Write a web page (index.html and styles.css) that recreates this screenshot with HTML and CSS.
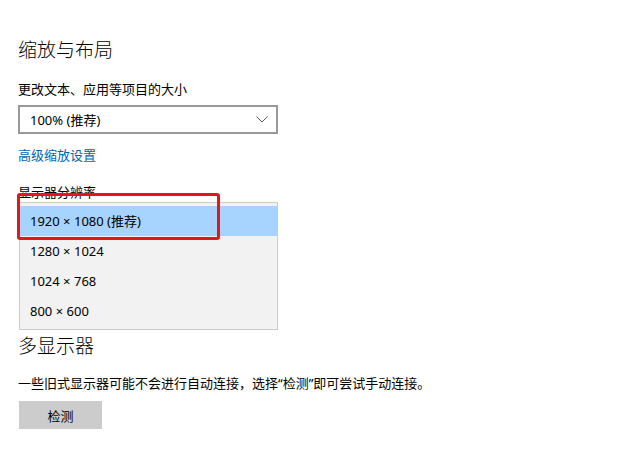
FILE: index.html
```html
<!DOCTYPE html>
<html lang="zh-CN">
<head>
<meta charset="utf-8">
<link rel="stylesheet" href="styles.css">
</head>
<body>
<div class="page">
  <h1 class="heading">缩放与布局</h1>
  <p class="label first">更改文本、应用等项目的大小</p>
  <div class="select">
    <span>100% (推荐)</span>
    <svg class="chev" width="12" height="7" viewBox="0 0 12 7"><polyline points="0.5,0.5 6,6 11.5,0.5" fill="none" stroke="#555" stroke-width="1"/></svg>
  </div>
  <a class="link">高级缩放设置</a>
  <div class="res">
    <p class="label">显示器分辨率</p>
    <div class="select under"></div>
    <ul class="menu">
      <li class="sel">1920 × 1080 (推荐)</li>
      <li>1280 × 1024</li>
      <li>1024 × 768</li>
      <li>800 × 600</li>
    </ul>
    <div class="mark"></div>
  </div>
  <h2 class="heading">多显示器</h2>
  <p class="label desc">一些旧式显示器可能不会进行自动连接，选择“检测”即可尝试手动连接。</p>
  <button class="btn">检测</button>
</div>
</body>
</html>
```
FILE: styles.css
```css
html, body {
  margin: 0;
  padding: 0;
  background: #fff;
}
body {
  font-family: "Noto Sans", "Noto Sans CJK SC", sans-serif;
  color: #000;
}
.page {
  padding: 38px 0 0 18px;
  display: flex;
  flex-direction: column;
  align-items: flex-start;
}
.heading {
  margin: 0;
  font-size: 19px;
  line-height: 24px;
  font-weight: 300;
}
.label {
  margin: 0;
  font-size: 13px;
  line-height: 18px;
}
.label.first {
  margin-top: 18px;
}
.select {
  margin-top: 7px;
  box-sizing: border-box;
  width: 260px;
  height: 29px;
  border: 2px solid #999;
  background: #fff;
  display: flex;
  align-items: center;
  justify-content: space-between;
  padding: 0 8px 0 10px;
  font-size: 13px;
}
.chev {
  display: block;
}
.link {
  margin-top: 12px;
  font-size: 13px;
  line-height: 18px;
  color: #0063b1;
}
.res {
  position: relative;
  margin-top: 19px;
  height: 151px;
  width: 260px;
}
.menu {
  position: absolute;
  top: 19px;
  left: 1px;
  width: 259px;
  box-sizing: border-box;
  margin: 0;
  padding: 3px 0;
  list-style: none;
  background: #f2f2f2;
  border: 1px solid #ccc;
}
.menu li {
  height: 30px;
  line-height: 30px;
  padding-left: 10px;
  font-size: 13px;
}
.menu li.sel {
  background: #a6d3ff;
}
.mark {
  position: absolute;
  top: 10px;
  left: -1px;
  width: 203px;
  height: 47px;
  box-sizing: border-box;
  border: 3px solid #e3161d;
  border-radius: 3px;
}
.desc {
  margin-top: 16px;
}
.btn {
  margin-top: 9px;
  width: 83px;
  height: 28px;
  margin-left: 1px;
  border: 0;
  background: #cccccc;
  font-family: "Noto Sans", "Noto Sans CJK SC", sans-serif;
  font-size: 13px;
  color: #000;
  padding: 0;
}
```
